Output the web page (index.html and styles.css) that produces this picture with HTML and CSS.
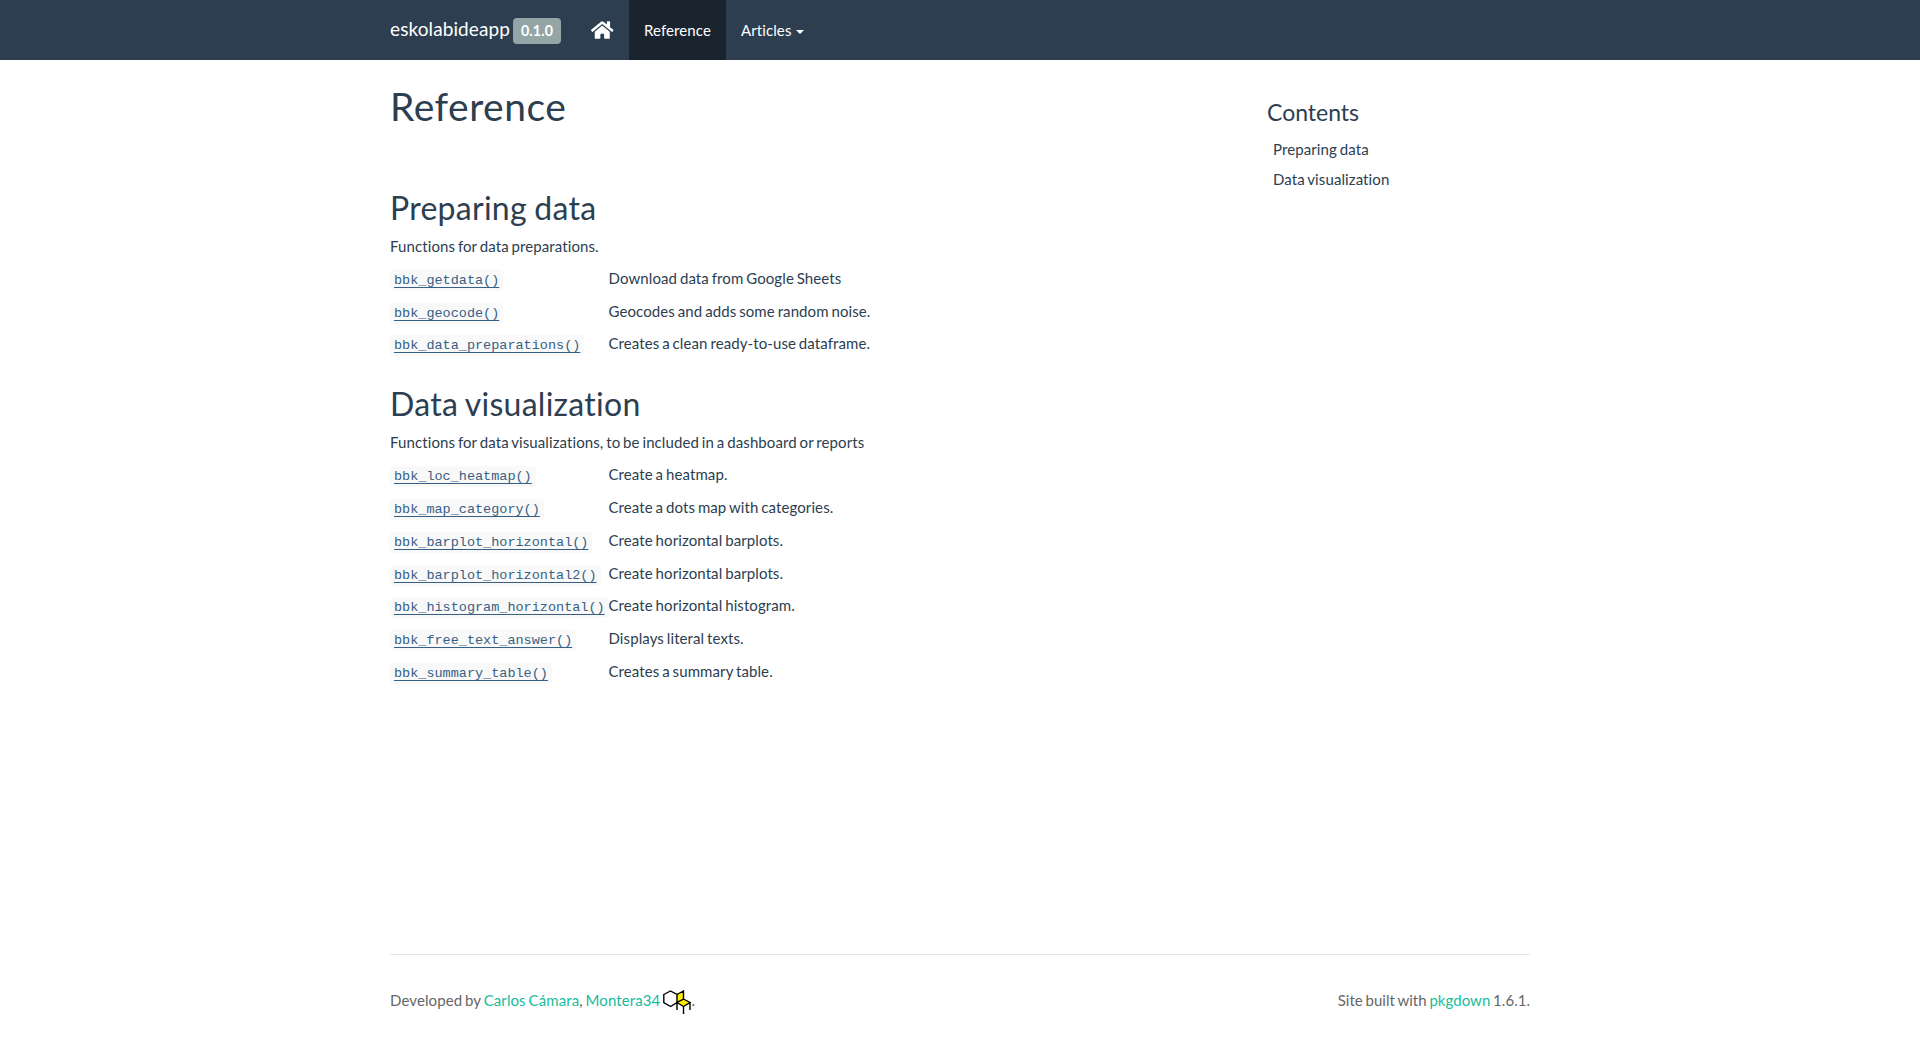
FILE: index.html
```html
<!DOCTYPE html>
<html lang="en"><head><meta charset="utf-8"><title>Function reference • eskolabideapp</title><link rel="stylesheet" href="styles.css"></head>
<body>
<header class="navbar"><div class="container nav-inner">
<div class="brand"><a href="#">eskolabideapp</a><span class="version">0.1.0</span></div>
<nav class="nav"><a href="#" class="home" aria-label="Home"><svg viewBox="0 0 576 512" width="22.5" height="20"><path fill="currentColor" d="M280.37 148.26L96 300.11V464a16 16 0 0 0 16 16l112.06-.29a16 16 0 0 0 15.92-16V368a16 16 0 0 1 16-16h64a16 16 0 0 1 16 16v95.64a16 16 0 0 0 16 16.05L464 480a16 16 0 0 0 16-16V300L295.67 148.26a12.19 12.19 0 0 0-15.3 0zM571.6 251.47L488 182.56V44.05a12 12 0 0 0-12-12h-56a12 12 0 0 0-12 12v72.61L318.47 43a48 48 0 0 0-61 0L4.34 251.47a12 12 0 0 0-1.6 16.9l25.5 31A12 12 0 0 0 45.15 301l235.22-193.74a12.19 12.19 0 0 1 15.3 0L530.9 301a12 12 0 0 0 16.9-1.6l25.5-31a12 12 0 0 0-1.7-16.93z"/></svg></a><a href="#" class="active">Reference</a><a href="#">Articles <span class="caret"></span></a></nav>
</div></header>
<div class="container row">
<main class="contents">
<div class="page-header"><h1>Reference</h1></div>
<section><h2>Preparing data</h2><p>Functions for data preparations.</p>
<dl class="ref">
<dt><code><a href="#">bbk_getdata()</a></code></dt><dd>Download data from Google Sheets</dd>
<dt><code><a href="#">bbk_geocode()</a></code></dt><dd>Geocodes and adds some random noise.</dd>
<dt><code><a href="#">bbk_data_preparations()</a></code></dt><dd>Creates a clean ready-to-use dataframe.</dd>
</dl></section>
<section><h2>Data visualization</h2><p>Functions for data visualizations, to be included in a dashboard or reports</p>
<dl class="ref">
<dt><code><a href="#">bbk_loc_heatmap()</a></code></dt><dd>Create a heatmap.</dd>
<dt><code><a href="#">bbk_map_category()</a></code></dt><dd>Create a dots map with categories.</dd>
<dt><code><a href="#">bbk_barplot_horizontal()</a></code></dt><dd>Create horizontal barplots.</dd>
<dt><code><a href="#">bbk_barplot_horizontal2()</a></code></dt><dd>Create horizontal barplots.</dd>
<dt><code><a href="#">bbk_histogram_horizontal()</a></code></dt><dd>Create horizontal histogram.</dd>
<dt><code><a href="#">bbk_free_text_answer()</a></code></dt><dd>Displays literal texts.</dd>
<dt><code><a href="#">bbk_summary_table()</a></code></dt><dd>Creates a summary table.</dd>
</dl></section>
</main>
<aside class="toc"><h2>Contents</h2><a href="#">Preparing data</a><a href="#">Data visualization</a></aside>
</div>
<div class="container foot-wrap"><footer><p>Developed by <a href="#">Carlos Cámara</a>, <a href="#">Montera34<svg class="logo" viewBox="0 0 29 25" width="29" height="25"><path fill="#ffed00" d="M15 4.5L21.5 1v8L15 12.5zM15 12.5L21.5 9l6.5 3.5-6.5 4z"/><path fill="none" stroke="#000" stroke-width="1.4" d="M1.8 4.5L8.5 1 15 4.5v8l-6.5 4-6.7-4zM15 4.5L21.5 1v8L15 12.5V20M21.5 9l6.5 3.5-6.5 4-6.5-4M21.5 16.5V24M28 12.5V20"/></svg></a>.</p><p class="built">Site built with <a href="#">pkgdown</a> 1.6.1.</p></footer></div>
</body></html>
```
FILE: styles.css
```css
*{box-sizing:border-box}
body{margin:0;min-height:1050px;display:flex;flex-direction:column;font:15px/1.42857 Lato,sans-serif;font-variant-ligatures:none;letter-spacing:.1px;word-spacing:-1.1px;color:#2c3e50;background:#fff}
a{color:#18bc9c;text-decoration:none}
.container{width:1140px;margin:0 auto}
.navbar{height:60px;background:#2c3e50;color:#fff}
.navbar a{color:#fff}
.nav-inner{display:flex}
.brand{display:flex;font-size:19px;line-height:21px;padding-top:18px;width:187px;white-space:nowrap}
.brand a{width:123px}
.version{height:26px;font-size:14.25px;font-weight:700;line-height:26px;background:#95a5a6;border-radius:4px;padding:0 8px}
.nav{display:flex}
.nav a{height:60px;padding:19.5px 15px;line-height:21px}
.nav .active{width:97px;background:#1a242f}
.home svg{display:block}
.nav .home{width:52px;padding-left:14px}
.caret{display:inline-block;margin-left:2px;vertical-align:middle;border-top:4px solid;border-left:4px solid transparent;border-right:4px solid transparent}
.row{display:flex;flex:1}
.contents{width:877px}
h1,h2{font-weight:400;line-height:1.1;margin:0}
.page-header{height:130.15px;padding-top:25px}
h1{font-size:39px;letter-spacing:.5px}
h2{font-size:32px;letter-spacing:.27px}
p{margin:0 0 10.5px}
section h2{margin-bottom:10.5px}
.ref{display:grid;grid-template-columns:218.5px 1fr;margin:0 0 20.1px}
dt,dd{margin:0;height:32.85px}
code{font:13.5px/1.42857 "Liberation Mono",monospace;letter-spacing:0;background:#f9f9f9;border-radius:4px;padding:3px 4px}
code a{color:#375f84;text-decoration:underline;text-decoration-thickness:1px;text-underline-offset:3px;text-decoration-skip-ink:auto}
.toc{padding-top:40px}
.toc h2{font-size:23px;letter-spacing:0;margin-bottom:10px}
.toc a{display:block;color:#2c3e50;padding:4px 6px}
.foot-wrap{height:96px}
footer{display:flex;justify-content:space-between;border-top:1px solid #e5e5e5;padding-top:35px;color:#666}
footer p{line-height:21px}
.built{letter-spacing:.03px}
.logo{vertical-align:middle;margin:-3px 0 -3px 2px}
```
